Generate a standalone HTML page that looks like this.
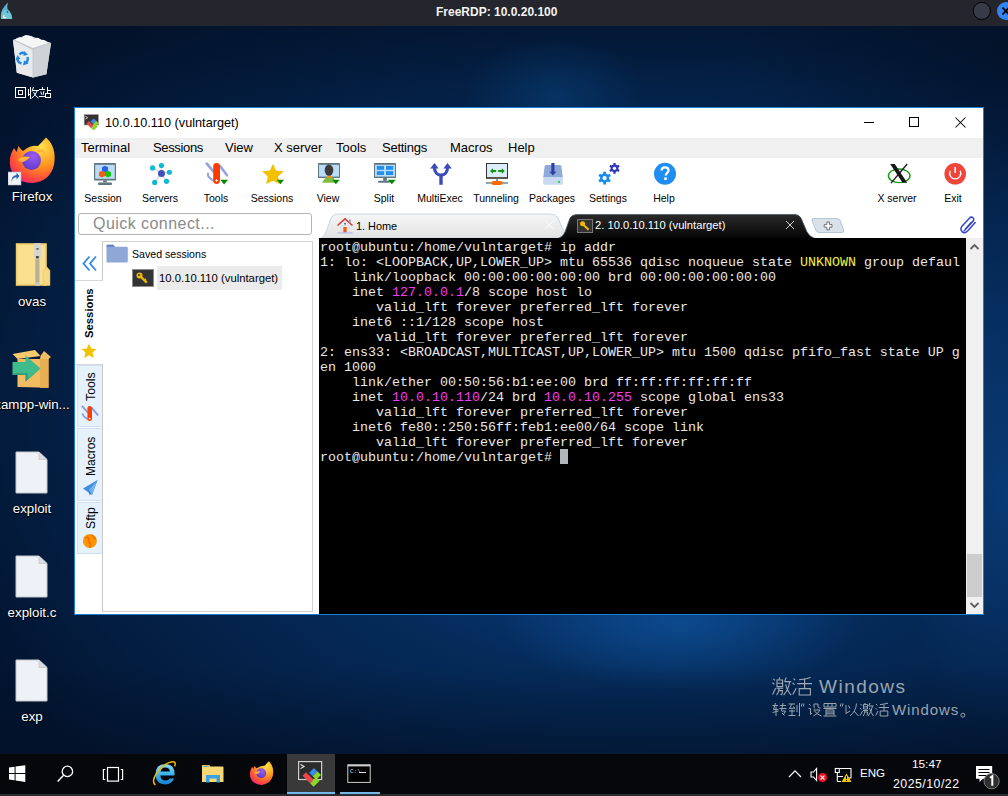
<!DOCTYPE html>
<html><head><meta charset="utf-8">
<style>
*{box-sizing:border-box;margin:0;padding:0}
html,body{width:1008px;height:796px;overflow:hidden}
body{position:relative;font-family:"Liberation Sans",sans-serif;background:#021226}
.a{position:absolute}
#topbar{left:0;top:0;width:1008px;height:26px;background:#24252d}
#desk{left:0;top:26px;width:1008px;height:728px;overflow:hidden;
 background:
 radial-gradient(ellipse 260px 150px at 1008px 26px, rgba(2,16,36,.55), rgba(2,16,36,0) 100%),
 radial-gradient(ellipse 90px 60px at 555px 70px, rgba(10,70,130,.45), rgba(10,70,130,0) 100%),
 linear-gradient(180deg, rgba(2,16,36,.55) 0px, rgba(2,16,36,.25) 60px, rgba(2,16,36,0) 200px),
 linear-gradient(180deg, rgba(2,16,36,0) 88%, rgba(2,16,36,.55) 100%),
 radial-gradient(ellipse 180px 70px at 680px 596px, rgba(16,90,165,.6), rgba(16,90,165,0) 100%),
 radial-gradient(ellipse 110px 260px at 1008px 470px, rgba(12,72,140,.55), rgba(12,72,140,0) 100%),
 radial-gradient(ellipse 720px 540px at 630px 380px, #0b4a8c 0%, #08397a 30%, #052b5a 50%, #04224a 70%, #031a3a 90%, #021430 100%)}
#taskbar{left:0;top:754px;width:1008px;height:40px;background:#05070b}
#bstrip{left:0;top:794px;width:1008px;height:2px;background:#2b2c31}
.dlabel{color:#fff;font-size:13.3px;text-align:center;width:80px;white-space:nowrap;text-shadow:0 0 2px #000,0 1px 1px #000}
.dfile{width:34px;height:44px}
#win{left:74px;top:107px;width:910px;height:508px;border:1px solid #1a7fd4;background:#fff}
.menu span{position:absolute;top:0;font-size:13px;color:#000;white-space:nowrap}
.tbl{top:192px;width:80px;margin-left:-40px;text-align:center;font-size:10.5px;color:#000;white-space:nowrap}
#term{left:319px;top:238px;width:647px;height:376px;background:#000;overflow:hidden}
#term pre{font-family:"Liberation Mono",monospace;font-size:13.33px;line-height:15px;color:#e8e8e8;position:absolute;left:1px;top:2px}
.vt{transform-origin:0 0;transform:rotate(-90deg);color:#000;white-space:nowrap;line-height:1}
.stab{left:77px;width:25px;background:#e5f1fb;border:1px solid #cfe0f0;border-right:none}
.mg{color:#f43cf4}.yl{color:#f0f040}
</style></head><body>
<div id="topbar" class="a"></div>
<div id="desk" class="a"></div>
<div id="taskbar" class="a"></div>
<div id="bstrip" class="a"></div>
<div class="a" style="left:436px;top:5px;font-size:12px;font-weight:bold;color:#f2f2f2">FreeRDP: 10.0.20.100</div>

<!-- top bar extras -->
<svg class="a" style="left:0;top:2px" width="14" height="18" viewBox="0 0 14 18"><path d="M1 17 Q0 10 4 5 Q6 2 8 0.5 Q6.8 4 7.5 7 Q12 11 12.3 17Z" fill="#5cb4cc"/><path d="M1.5 17 Q1 12 3 9 L8 8 Q11.5 11 12 17Z" fill="#72c4d8"/><circle cx="4.6" cy="14.8" r="1.8" fill="#fff"/><circle cx="5.2" cy="14.3" r="1" fill="#5cb4cc"/><circle cx="7.5" cy="9.8" r="0.9" fill="#1a5d78"/></svg>
<svg class="a" style="left:970px;top:0" width="38" height="24" viewBox="0 0 38 24"><circle cx="11.8" cy="10.9" r="8.6" fill="#373a47" stroke="#000" stroke-width="1"/><circle cx="36" cy="11" r="9" fill="#3584f0"/><path d="M32.5 7.5 L39 14.5 M39 7.5 L32.5 14.5" stroke="#000" stroke-width="1.8"/></svg>
<!-- desktop icons -->
<svg class="a" style="left:10px;top:33px" width="46" height="48" viewBox="10 33 46 48">
 <path d="M13 40 L27 35 L51 43 L46.4 74.3 L33 77.5 L16.8 72.8Z" fill="#dcdee2"/>
 <path d="M13 40 L33 50 L33 77.5 L16.8 72.8Z" fill="#e9eaec"/>
 <path d="M33 50 L51 43 L46.4 74.3 L33 77.5Z" fill="#cfd2d7"/>
 <path d="M13 40 L27 35 L51 43 L33 50Z" fill="#c4c7cc"/>
 <path d="M15 40 Q18 36 22 38 Q24 34 28 36 Q32 35 34 39 Q38 36 41 40 Q45 39 48 43 L33 48Z" fill="#f6f6f7"/>
 <path d="M33 50 V77.5" stroke="#b8bcc2" stroke-width="0.6"/>
 <g stroke="#1e88e5" stroke-width="2.4" fill="none"><path d="M19.5 54.5 Q22 51.5 25 53.5"/><path d="M27.5 57 Q28.5 61 25.5 63"/><path d="M21.5 63.5 Q17.5 62.5 17.5 58.5"/></g>
 <g fill="#1e88e5"><path d="M24 51 L28 54.5 L23.5 56Z"/><path d="M28.5 63.5 L23 65.5 L24 60.5Z"/><path d="M15.5 60 L17.5 55 L20.5 59Z"/></g>
</svg>
<svg class="a" style="left:12px;top:84px" width="42" height="16" viewBox="12 84 42 16"><g stroke="#fff" stroke-width="1" fill="none" shape-rendering="crispEdges">
 <path d="M15.5 87.5 H25.5 V97.5 H15.5Z M18.5 90.5 H22.5 V94.5 H18.5Z"/>
 <path d="M28.5 89 V95 L30 94.2 M30.5 87 V98.5"/>
 <path d="M32.5 90.5 H38.5"/>
 <path d="M42 87 V89 M39 89.5 H45 M39 96.5 H45 M47.5 87 V93 M47.5 90.5 H51 M45.5 93.5 H50.5 V97.5 H45.5Z"/>
 </g><g stroke="#fff" stroke-width="1" fill="none">
 <path d="M33.5 87 L32 91.5 M37 91 Q35.5 95.5 31.5 98.4 M33.5 92 Q35 96 38.5 98.2"/>
 <path d="M40.8 91.5 L41.6 94.5 M44 91 L43 95"/>
 </g></svg>
<svg class="a" style="left:8px;top:135px" width="50" height="52" viewBox="0 0 50 52">
 <defs><radialGradient id="ffo" cx="0.7" cy="0.2" r="0.9"><stop offset="0" stop-color="#ffe24a"/><stop offset="0.45" stop-color="#ff9a1f"/><stop offset="0.8" stop-color="#ff4a3a"/><stop offset="1" stop-color="#e8247a"/></radialGradient>
 <radialGradient id="ffp" cx="0.6" cy="0.3" r="0.8"><stop offset="0" stop-color="#9b5cf0"/><stop offset="1" stop-color="#5a35c8"/></radialGradient></defs>
 <path d="M38 2.5 Q49 12 46 30 Q42 46 25 48 Q8 48.5 2.5 33 Q0 22 6 13 L8.5 17 L10.5 11 Q13 15 15 16 Q22 10 30 11 Q35 6 38 2.5Z" fill="url(#ffo)"/>
 <circle cx="23.5" cy="25.5" r="9.5" fill="url(#ffp)"/>
 <path d="M10 25 Q14 20 22 22 Q19 26 15 27 Q12 27 10 25Z" fill="#ffb43a"/>
 <path d="M30 14 Q36 13 38 20 Q34 16 30 17Z" fill="#ffb43a"/>
 <rect x="0" y="37" width="13" height="13" fill="#f0f4f8" stroke="#a8b4c0" stroke-width="0.6"/>
 <path d="M3.5 47 Q3.5 42 8.5 41 L8.5 43.5 L11.5 40 L8.5 36.8 L8.5 39 Q3 39.5 3.5 47Z" fill="#2a62b0" transform="translate(0 1)"/>
</svg>
<svg class="a" style="left:14px;top:241px" width="38" height="47" viewBox="14 241 38 47">
 <rect x="15.8" y="243.2" width="31" height="42.6" fill="#f3cf6a"/>
 <rect x="17.6" y="245" width="27.4" height="39" fill="#f9df8e"/>
 <path d="M42.8 285.8 V270.4 L46.8 266.6 L50.2 270.6 V285.8Z" fill="#f1cb62"/>
 <path d="M43.6 285 V271 L46.8 268 L49.4 271 V285Z" fill="#f7d983"/>
 <rect x="35.6" y="256" width="3.6" height="27.5" fill="#8c8460"/>
 <path d="M35.8 258 h3.2 M35.8 260 h3.2 M35.8 262 h3.2 M35.8 264 h3.2 M35.8 266 h3.2 M35.8 268 h3.2 M35.8 270 h3.2 M35.8 272 h3.2 M35.8 274 h3.2 M35.8 276 h3.2 M35.8 278 h3.2 M35.8 280 h3.2" stroke="#e6e6e6" stroke-width="0.9"/>
 <rect x="35.2" y="281.5" width="4.4" height="4.3" fill="#c8c8c8"/>
 <path d="M34.2 243.2 H40.8 V256 Q40.8 259.6 37.5 259.6 Q34.2 259.6 34.2 256Z" fill="#d4d4d4"/>
 <rect x="36.4" y="248" width="2.2" height="1.8" fill="#666"/>
 <rect x="36" y="256" width="2.8" height="2.4" fill="#444"/>
</svg>
<svg class="a" style="left:11px;top:348px" width="44" height="42" viewBox="0 0 44 42">
 <path d="M6.5 11 H37.5 V39.8 L6.5 39Z" fill="#f2bd62"/>
 <path d="M29 11 H37.5 V39.8 H29Z" fill="#e8ae52"/>
 <path d="M1.5 6 L24 2 L29.5 8 L6.5 11Z" fill="#f7c96c"/>
 <path d="M29.5 8 L33 3 L40 9 L37.5 11 H29Z" fill="#f2bd62"/>
 <path d="M1.5 14 H14.5 V7.5 L29.5 20.5 L14.5 33.5 V27 H1.5Z" fill="#3fbb8c"/>
 <path d="M1.5 27 H14.5 V33.5 L29.5 20.5 L17 30.5 V25 H3Z" fill="#33a07a"/>
</svg>
<svg class="a dfile" style="left:15px;top:451px"><path d="M1 1 H24 L32 8.5 V42 H1Z" fill="#eef1f6" stroke="#c4c7cc" stroke-width="1"/><path d="M24 1 V8.5 H32Z" fill="#d9dde3" stroke="#c4c7cc" stroke-width="0.8"/></svg>
<svg class="a dfile" style="left:15px;top:555px"><path d="M1 1 H24 L32 8.5 V42 H1Z" fill="#eef1f6" stroke="#c4c7cc" stroke-width="1"/><path d="M24 1 V8.5 H32Z" fill="#d9dde3" stroke="#c4c7cc" stroke-width="0.8"/></svg>
<svg class="a dfile" style="left:15px;top:659px"><path d="M1 1 H24 L32 8.5 V42 H1Z" fill="#eef1f6" stroke="#c4c7cc" stroke-width="1"/><path d="M24 1 V8.5 H32Z" fill="#d9dde3" stroke="#c4c7cc" stroke-width="0.8"/></svg>
<div class="a dlabel" style="left:-8px;top:189px">Firefox</div>
<div class="a dlabel" style="left:-8px;top:294px">ovas</div>
<div class="a dlabel" style="left:-8px;top:397px">xampp-win...</div>
<div class="a dlabel" style="left:-8px;top:501px">exploit</div>
<div class="a dlabel" style="left:-8px;top:605px">exploit.c</div>
<div class="a dlabel" style="left:-8px;top:709px">exp</div>
<!-- activation watermark -->
<svg class="a" style="left:770px;top:675px" width="44" height="22" viewBox="770 675 44 22"><g stroke="#a3abb4" stroke-width="1.1" fill="none">
 <path d="M773.2 678.8 L775 680.4 M772.4 682.8 L774.4 684.4 M772.6 694.6 L775.6 688.2"/>
 <path d="M779.6 677.4 L779 679.6 M777 680 H782.6 V686.6 H777Z M777 683.3 H782.6"/>
 <path d="M776.4 688.2 H783.2 M779 688.4 Q779 692.5 776.6 695 M779.2 690.6 H782.4 Q782.6 693.5 781.6 694.6 L780.4 694.2"/>
 <path d="M786.2 677.4 L784.6 681.6 M784.6 681.6 H791.2 M789.6 681.8 Q788.5 690 783.6 695 M785.6 684.4 Q787.5 691.5 791.2 695"/>
 <path d="M793.6 678.6 L795.2 680.2 M792.6 683 L794.6 684.6 M792.8 694.6 L796.2 688.2"/>
 <path d="M810.6 677.4 Q805 679.2 799 679.8 M797.2 683.6 H812 M804.6 679 V688.2 M799.2 688.6 H810.4 V695 H799.2Z"/>
 </g></svg>
<div class="a" style="left:819px;top:676px;font-size:19px;color:#9ba4ae;white-space:nowrap;letter-spacing:1.5px">Windows</div>
<svg class="a" style="left:770px;top:701px" width="122" height="17" viewBox="770 701 122 17"><g stroke="#9ba4ae" stroke-width="1" fill="none">
 <path d="M772.5 705.5 H778 M775.5 703 L773.5 709.5 H778.5 M776 706.5 V716 M772.5 712.5 L778.5 711"/>
 <path d="M780 705.5 H786 M779.5 708.5 H786.5 M783 703 L781.5 711 H785.5 L783.5 714.5 M782 713 L784.5 715.5"/>
 <path d="M788.5 704 H795 M792 704 L789.5 708.5 L794.5 708 M793.5 706.5 L795 709 M789 711 H795 M792 709.5 V715 M788.5 715.5 H795.5"/>
 <path d="M797 705 V712 M799.5 703 V716 L798.5 715.5"/>
 <path d="M802 703.5 L801.3 706.5 M804 703.5 L803.3 706.5"/>
 <path d="M809 704 L810.5 705.5 M808.5 708.5 H810.5 V714.5 L812 713"/>
 <path d="M814 704 V707 Q814 708 815 708 M814 704 H818 V707 Q818 708 820.5 708 M813.5 710 H820 Q818.5 713.5 813.5 716 M814.5 711 Q817 714.5 821.5 716"/>
 <path d="M824 703.5 H836 V707 H824Z M828 703.5 V707 M832 703.5 V707"/>
 <path d="M823.5 708.5 H836.5 M830 707.5 V709.5 M826 709.5 V716 M826 710 H834 V715.5 M826 712 H834 M826 713.8 H834 M823.5 716 H836.5"/>
 <path d="M841 703.5 L840.3 706.5 M843 703.5 L842.3 706.5"/>
 <path d="M846 705 V713.5 L850 711 M848.5 705.5 L850 708.5 M856.5 703.5 Q856 711 850 716 M854 711 L858.5 716"/>
 <path d="M860.5 704 L862 705.5 M860 708 L861.5 709.5 M860.2 715.5 L862.5 711"/>
 <path d="M865 703 L864.6 704.5 M863.5 704.5 H867.5 V709 H863.5Z M863.5 706.8 H867.5 M863 710.5 H868 M865 710.5 Q865 713.5 863.2 716 M865.2 712 H867.6 Q867.7 714.5 866.8 715.5"/>
 <path d="M870 703 L868.8 706 H873.5 M872.5 706 Q871.5 712 868.2 716 M869.5 708 Q871 713 873.5 716"/>
 <path d="M876 704 L877.5 705.5 M875.5 708 L877 709.5 M875.7 715.5 L878 711"/>
 <path d="M888 703.2 Q884 704.2 880 704.6 M878.8 707.5 H889 M884 704.5 V711 M880.2 711 H887.8 V716 H880.2Z"/>
 </g></svg>
<div class="a" style="left:892px;top:701px;font-size:15px;color:#9ba4ae;white-space:nowrap;letter-spacing:0.9px">Windows</div>
<svg class="a" style="left:958px;top:711px" width="10" height="8" viewBox="958 711 10 8"><circle cx="962.9" cy="715.2" r="2" stroke="#9aa3ad" stroke-width="1" fill="none"/></svg>
<!-- taskbar icons -->
<svg class="a" style="left:8px;top:765px" width="19" height="18" viewBox="0 0 19 18"><g fill="#fff"><path d="M1 2.5 L6.6 1.7 V7.9 H1Z"/><path d="M7.6 1.55 L17.3 0.2 V7.9 H7.6Z"/><path d="M1 9 H6.6 V15.3 L1 14.5Z"/><path d="M7.6 9 H17.3 V16.9 L7.6 15.5Z"/></g></svg>
<svg class="a" style="left:55px;top:763px" width="20" height="21" viewBox="0 0 20 21"><circle cx="12.4" cy="8.4" r="5.2" stroke="#fff" stroke-width="1.3" fill="none"/><path d="M8.6 12.2 L2.6 18.4" stroke="#fff" stroke-width="1.5"/></svg>
<svg class="a" style="left:101px;top:765px" width="24" height="18" viewBox="0 0 24 18"><g stroke="#fff" stroke-width="1.2" fill="none"><rect x="6.5" y="2.5" width="11" height="13.6"/><path d="M4.3 4.5 H2.4 V14.5 H4.3 M19.7 4.5 H21.6 V14.5 H19.7"/></g></svg>
<svg class="a" style="left:151px;top:760px" width="26" height="27" viewBox="151 760 26 27">
 <defs><linearGradient id="ieg" x1="0" y1="0" x2="0" y2="1"><stop offset="0" stop-color="#8adcfa"/><stop offset="0.5" stop-color="#3ab4ee"/><stop offset="1" stop-color="#1a7fd0"/></linearGradient></defs>
 <path d="M174.4 775.6 H160.4 Q160.8 780.6 165.6 780.6 Q168.6 780.6 170 778.6 H174 Q172 784.4 165.4 784.4 Q155.6 784.4 155.6 774.2 Q155.6 764 165.4 764 Q174.6 764 174.6 774.2Z M160.6 771.6 H170 Q169.4 767.6 165.4 767.6 Q161.4 767.6 160.6 771.6Z" fill="url(#ieg)" fill-rule="evenodd"/>
 <path d="M155.4 785 Q150.8 781.5 157.5 772 Q165 762.5 172.5 761.8 Q176.5 761.6 174.6 766.4" stroke="#f2b600" stroke-width="1.5" fill="none"/>
</svg>
<svg class="a" style="left:201px;top:764px" width="24" height="20" viewBox="0 0 24 20"><path d="M1 2 Q1 1 2 1 H8 L9.5 2.5 H21.5 Q22.5 2.5 22.5 3.5 V18 H1Z" fill="#f8d775"/><path d="M1 1 H8 L9.5 2.5 H1Z" fill="#e6b74a"/><rect x="2.5" y="2" width="5" height="1" fill="#5ab4e8"/><path d="M5 11 H19 V18.5 H15.5 V14.5 H8.5 V18.5 H5Z" fill="#3aa2e2"/></svg>
<svg class="a" style="left:249px;top:760px" width="26" height="27" viewBox="0 0 50 52">
 <path d="M38 2.5 Q49 12 46 30 Q42 46 25 48 Q8 48.5 2.5 33 Q0 22 6 13 L8.5 17 L10.5 11 Q13 15 15 16 Q22 10 30 11 Q35 6 38 2.5Z" fill="url(#ffo)"/>
 <circle cx="23.5" cy="25.5" r="9.5" fill="url(#ffp)"/>
 <path d="M10 25 Q14 20 22 22 Q19 26 15 27 Q12 27 10 25Z" fill="#ffb43a"/>
</svg>
<div class="a" style="left:287px;top:754px;width:48px;height:40px;background:#393939"></div>
<div class="a" style="left:287px;top:792px;width:48px;height:2px;background:#76b9ed"></div>
<div class="a" style="left:340px;top:792px;width:40px;height:2px;background:#76b9ed"></div>
<svg class="a" style="left:297px;top:760px" width="28" height="27" viewBox="83.4 113.6 17.5 16.9">
 <rect x="84.4" y="114.6" width="14.4" height="11.2" fill="#2b2b2b" stroke="#cfcfcf" stroke-width="0.75"/>
 <path d="M85.6 116.4 L87.8 117.7 L85.6 119" stroke="#e8e8e8" stroke-width="0.7" fill="none"/>
 <path d="M86.8 123.4 L89 121.2 L93.8 126 L91.6 128.2Z" fill="#e8474a"/>
 <path d="M91 121.6 L94 118.6 L96.2 120.8 L93.2 123.8Z" fill="#3d88ec"/>
 <path d="M91.6 128.2 L93.8 126 L95.4 124.4 L97.6 126.6 L96 128.2 L93.8 130.4Z" fill="#8cd82a"/>
 <path d="M93.2 123.8 L96.2 120.8 L98.4 123 L95.4 126Z" fill="#8cd82a"/>
</svg>
<svg class="a" style="left:347px;top:764px" width="24" height="20" viewBox="0 0 24 20"><rect x="0.8" y="0.8" width="22.4" height="17.6" fill="#000" stroke="#cfcfcf" stroke-width="1"/><rect x="0.8" y="0.8" width="22.4" height="1.6" fill="#cfcfcf"/><text x="3" y="9" font-family="Liberation Mono" font-size="6" fill="#ddd">C:\</text><rect x="12" y="8" width="7" height="1" fill="#ddd"/></svg>
<!-- tray -->
<svg class="a" style="left:788px;top:769px" width="14" height="9" viewBox="0 0 14 9"><path d="M1 8 L7 1.8 L13 8" stroke="#fff" stroke-width="1.2" fill="none"/></svg>
<svg class="a" style="left:810px;top:767px" width="18" height="16" viewBox="0 0 18 16"><path d="M1 5 H3.5 L6.6 1.5 V13.5 L3.5 10 H1Z" stroke="#fff" stroke-width="1.1" fill="none"/><circle cx="12.5" cy="10.6" r="4.6" fill="#e81123"/><path d="M10.6 8.7 L14.4 12.5 M14.4 8.7 L10.6 12.5" stroke="#fff" stroke-width="1.1"/></svg>
<svg class="a" style="left:834px;top:767px" width="19" height="16" viewBox="0 0 19 16"><g stroke="#fff" stroke-width="1.1" fill="none"><path d="M6 1.5 H17 V11 H11"/><rect x="1.3" y="1.5" width="4" height="4"/><path d="M3.3 5.5 V14.5 M3.3 9.5 H9 M3.3 14.5 H7"/></g><path d="M12.5 6.5 L17.5 15 H7.5Z" fill="#f4c400"/><path d="M12.5 9 V12 M12.5 13 V14" stroke="#000" stroke-width="1"/></svg>
<div class="a" style="left:860px;top:766px;font-size:11.6px;color:#fff;white-space:nowrap">ENG</div>
<div class="a" style="left:912px;top:757px;font-size:11.8px;color:#fff;white-space:nowrap">15:47</div>
<div class="a" style="left:893px;top:777px;font-size:12.3px;color:#fff;white-space:nowrap;letter-spacing:0.5px">2025/10/22</div>
<svg class="a" style="left:974px;top:764px" width="30" height="30" viewBox="0 0 30 30"><path d="M2 2 H18.2 V14.8 H9 L5.5 18 V14.8 H2Z" fill="#fff"/><path d="M4.5 5.5 H15.5 M4.5 8.5 H15.5 M4.5 11.5 H12" stroke="#000" stroke-width="1.1"/><circle cx="17.6" cy="17.2" r="7.6" fill="#2f2f2f" stroke="#7a7a7a" stroke-width="1"/><path d="M16 13.8 L18.3 12.2 V21.8" stroke="#fff" stroke-width="2" fill="none"/></svg>
<div id="win" class="a"></div>
<!-- title bar -->
<svg class="a" style="left:83px;top:113px" width="17" height="17" viewBox="83 113 17 17">
 <rect x="84.2" y="114.6" width="14.2" height="10.4" fill="#333" stroke="#9a9a9a" stroke-width="0.7"/>
 <path d="M85.3 116.3 L87.8 117.7 L85.3 119.1" stroke="#e0e0e0" stroke-width="0.8" fill="none"/>
 <path d="M86.4 123.4 L88.8 121 L93.6 125.8 L91.2 128.2Z" fill="#e8474a"/>
 <path d="M90.6 121.6 L93.8 118.4 L96.2 120.8 L93 124Z" fill="#3d88ec"/>
 <path d="M91.2 128.2 L93.6 125.8 L95.2 124.2 L97.6 126.6 L96 128.2 L93.6 130.6Z" fill="#8cd82a"/>
 <path d="M93 124 L96.2 120.8 L98.6 123.2 L95.4 126.4Z" fill="#8cd82a"/>
</svg>
<div class="a" style="left:105px;top:116px;font-size:12.7px;color:#000;white-space:nowrap">10.0.10.110 (vulntarget)</div>
<div class="a" style="left:864px;top:122px;width:10px;height:1px;background:#000"></div>
<div class="a" style="left:909px;top:117px;width:10px;height:10px;border:1px solid #000"></div>
<svg class="a" style="left:955px;top:117px" width="11" height="11" viewBox="0 0 11 11"><path d="M0.5 0.5 L10.5 10.5 M10.5 0.5 L0.5 10.5" stroke="#000" stroke-width="1.05"/></svg>
<!-- menu -->
<div class="a" style="left:75px;top:138px;width:908px;height:20px;background:#f0f0f0"></div>
<div class="a menu" style="left:0;top:140px;width:1008px;height:16px">
 <span style="left:81px">Terminal</span><span style="left:153px;letter-spacing:-0.35px">Sessions</span><span style="left:225px">View</span><span style="left:274px">X server</span><span style="left:336px">Tools</span><span style="left:382px;letter-spacing:-0.25px">Settings</span><span style="left:450px">Macros</span><span style="left:508px">Help</span>
</div>

<!-- toolbar icons -->
<svg class="a" style="left:90px;top:160px" width="30" height="30" viewBox="0 0 30 30">
 <rect x="4" y="3" width="22" height="17.5" rx="0.8" fill="#5e7682"/>
 <rect x="5.2" y="4.8" width="19.6" height="14" fill="#bcdcf6"/>
 <rect x="13.2" y="20.3" width="3.6" height="2.2" fill="#5e7682"/>
 <rect x="8" y="22.6" width="14" height="2.3" rx="1" fill="#5e7682"/>
 <path d="M15 5.8 L18 7.2 L18 11 L15 12.4 L12 11 L12 7.2Z" fill="#2a62f2"/>
 <path d="M12 10.8 L15 12.2 L15 16 L12 17.4 L9 16 L9 12.2Z" fill="#f2600e"/>
 <path d="M18 10.8 L21 12.2 L21 16 L18 17.4 L15 16 L15 12.2Z" fill="#16c416"/>
</svg>
<svg class="a" style="left:146px;top:160px" width="30" height="30" viewBox="0 0 30 30">
 <g stroke="#d4d8e0" stroke-width="1.4"><path d="M15.45 13.4 L15.45 5.5 M15.45 13.4 L6.6 7.9 M15.45 13.4 L23.4 12.25 M15.45 13.4 L20.5 21.3 M15.45 13.4 L8.7 22.4"/></g>
 <circle cx="15.45" cy="13.4" r="3.5" fill="#4250b8"/>
 <g fill="#10b8d6"><circle cx="15.45" cy="5.5" r="2.6"/><circle cx="6.6" cy="7.9" r="2.6"/><circle cx="23.4" cy="12.25" r="2.6"/><circle cx="20.5" cy="21.3" r="2.6"/><circle cx="8.7" cy="22.4" r="2.6"/></g>
</svg>
<svg class="a" style="left:202px;top:160px" width="30" height="30" viewBox="0 0 30 30">
 <g stroke="#8a98dc" stroke-linecap="round" fill="none" opacity="0.9"><path d="M4.8 3.6 L11 11" stroke-width="2.6"/><path d="M18 6 L25 15.2" stroke-width="2.6"/><path d="M6 13.5 C5 16 8 18.5 11 20.5" stroke-width="2"/></g>
 <rect x="11.2" y="3" width="6.8" height="21" rx="3.4" fill="#ff3c00"/>
 <path d="M14.6 18.8 L15.2 20 L16.4 20.5 L15.2 21 L14.6 22.2 L14 21 L12.8 20.5 L14 20Z" fill="#fff"/>
 <path d="M18.3 19.8 L26 19.8 L22.1 24.6Z" fill="#008a00"/>
</svg>
<svg class="a" style="left:258px;top:160px" width="30" height="30" viewBox="0 0 30 30">
 <path d="M15 3.8 L18 10.6 L25.8 11.3 L20 16.4 L21.6 24 L15 20.8 L8.2 24 L9.8 16.4 L4.1 11.3 L11.9 10.6Z" fill="#f2c100"/>
 <path d="M18.8 19.8 L26 19.8 L22.4 24.2Z" fill="#008a00"/>
</svg>
<svg class="a" style="left:314px;top:160px" width="30" height="30" viewBox="0 0 30 30">
 <rect x="4" y="3" width="22" height="15" rx="0.8" fill="#5e7682"/>
 <rect x="5" y="4.8" width="20" height="11.8" fill="#bcdcf6"/>
 <path d="M8 22.8 L11.5 17.6 L19.5 17.6 L22 22.8Z" fill="#7cc043"/>
 <rect x="12.8" y="15.6" width="4.8" height="2.2" fill="#ff9500"/>
 <ellipse cx="15" cy="10.2" rx="4.3" ry="5.6" fill="#3b3b3b"/>
 <path d="M18.3 19.8 L25.8 19.8 L21.8 24.2Z" fill="#008a00"/>
</svg>
<svg class="a" style="left:370px;top:160px" width="30" height="30" viewBox="0 0 30 30">
 <rect x="4" y="3" width="22" height="15" rx="0.8" fill="#5e7682"/>
 <rect x="5" y="4.8" width="20" height="11.8" fill="#bcdcf6"/>
 <g fill="#2090f2"><rect x="6.8" y="6" width="7.2" height="3.8"/><rect x="16" y="6" width="7.2" height="3.8"/><rect x="6.8" y="11.2" width="7.2" height="3.8"/><rect x="16" y="11.2" width="7.2" height="3.8"/></g>
 <rect x="13.2" y="18" width="3.6" height="2.8" fill="#5e7682"/>
 <rect x="8" y="20.8" width="12" height="2" rx="0.8" fill="#5e7682"/>
 <path d="M18 19.8 L25.8 19.8 L21.8 24.2Z" fill="#008a00"/>
</svg>
<svg class="a" style="left:426px;top:160px" width="30" height="30" viewBox="0 0 30 30">
 <g fill="#3a4cb8"><path d="M4.2 8.6 L8.5 3 L12.6 8.6Z"/><path d="M17.4 8.6 L21.5 3 L25.8 8.6Z"/><rect x="13.3" y="15" width="3.4" height="9.8"/></g>
 <path d="M8.5 7.5 C8.5 12.5 11.5 15.2 15 15.2 C18.5 15.2 21.5 12.5 21.5 7.5" stroke="#3a4cb8" stroke-width="3.2" fill="none"/>
</svg>
<svg class="a" style="left:482px;top:160px" width="30" height="30" viewBox="0 0 30 30">
 <rect x="4" y="3" width="22" height="15.8" fill="#333"/>
 <rect x="5" y="4" width="20" height="13.2" fill="#dcecfa"/>
 <path d="M8 11 L11 8.2 L11 10 L14.2 10 L14.2 12 L11 12 L11 13.8Z" fill="#0e960e"/>
 <path d="M22.8 11 L19.8 8.2 L19.8 10 L16.2 10 L16.2 12 L19.8 12 L19.8 13.8Z" fill="#0e960e"/>
 <rect x="14" y="18.8" width="2" height="2.5" fill="#8a9aa5"/>
 <rect x="4" y="22.2" width="22" height="1.6" fill="#7d8f99"/>
 <rect x="9.6" y="21" width="10.8" height="4" rx="1.8" fill="#ff6a00"/>
</svg>
<svg class="a" style="left:538px;top:160px" width="30" height="30" viewBox="0 0 30 30">
 <path d="M8.2 5 L21.8 5 Q23 5 23.3 6.2 L24.8 17.6 L5.2 17.6 L6.7 6.2 Q7 5 8.2 5Z" fill="#8eaad8"/>
 <rect x="5.2" y="17.4" width="19.6" height="7.4" rx="1.4" fill="#c8daf2"/>
 <rect x="20.2" y="21" width="1.8" height="1.8" fill="#22cc22"/>
 <rect x="13.3" y="3" width="3.2" height="9" fill="#3440a8"/>
 <path d="M11.2 11.8 L18.5 11.8 L14.9 15.6Z" fill="#3440a8"/>
</svg>
<svg class="a" style="left:594px;top:156px" width="30" height="30" viewBox="0 0 30 30"><circle cx="10.6" cy="22.1" r="4.6" fill="#1a8cf2"/><rect x="9.20" y="15.70" width="2.8" height="2.80" fill="#1a8cf2" transform="rotate(0 10.6 22.1)"/><rect x="9.20" y="15.70" width="2.8" height="2.80" fill="#1a8cf2" transform="rotate(60 10.6 22.1)"/><rect x="9.20" y="15.70" width="2.8" height="2.80" fill="#1a8cf2" transform="rotate(120 10.6 22.1)"/><rect x="9.20" y="15.70" width="2.8" height="2.80" fill="#1a8cf2" transform="rotate(180 10.6 22.1)"/><rect x="9.20" y="15.70" width="2.8" height="2.80" fill="#1a8cf2" transform="rotate(240 10.6 22.1)"/><rect x="9.20" y="15.70" width="2.8" height="2.80" fill="#1a8cf2" transform="rotate(300 10.6 22.1)"/><circle cx="10.6" cy="22.1" r="2.1" fill="#fff"/><circle cx="20.5" cy="12.35" r="3.8" fill="#3238b8"/><rect x="19.35" y="6.95" width="2.3" height="2.60" fill="#3238b8" transform="rotate(0 20.5 12.35)"/><rect x="19.35" y="6.95" width="2.3" height="2.60" fill="#3238b8" transform="rotate(60 20.5 12.35)"/><rect x="19.35" y="6.95" width="2.3" height="2.60" fill="#3238b8" transform="rotate(120 20.5 12.35)"/><rect x="19.35" y="6.95" width="2.3" height="2.60" fill="#3238b8" transform="rotate(180 20.5 12.35)"/><rect x="19.35" y="6.95" width="2.3" height="2.60" fill="#3238b8" transform="rotate(240 20.5 12.35)"/><rect x="19.35" y="6.95" width="2.3" height="2.60" fill="#3238b8" transform="rotate(300 20.5 12.35)"/><circle cx="20.5" cy="12.35" r="1.6" fill="#fff"/></svg>
<svg class="a" style="left:650px;top:160px" width="30" height="30" viewBox="0 0 30 30">
 <circle cx="15" cy="13.8" r="11" fill="#1e8ef2"/>
 <path d="M11.6 10.6 C11.6 8.4 13.2 7.4 15 7.4 C17 7.4 18.5 8.6 18.5 10.4 C18.5 12.6 15.8 13 15.8 15.6" stroke="#fff" stroke-width="2.3" fill="none"/>
 <rect x="14.2" y="17.4" width="2.6" height="2.6" fill="#fff"/>
</svg>
<svg class="a" style="left:883px;top:160px" width="30" height="30" viewBox="0 0 30 30">
 <ellipse cx="16.2" cy="15.8" rx="10.8" ry="6.8" stroke="#129a12" stroke-width="1.4" fill="none"/>
 <path d="M7.2 4 L11.8 4 L24.2 22.8 L19.6 22.8Z" fill="#161616"/>
 <path d="M24.2 4 L8 23.2" stroke="#161616" stroke-width="1.3"/>
</svg>
<svg class="a" style="left:939px;top:160px" width="30" height="30" viewBox="0 0 30 30">
 <circle cx="16.2" cy="13.8" r="10.8" fill="#f0453a"/>
 <path d="M11.2 10.8 A5.6 5.6 0 1 0 21.2 10.8" stroke="#fff" stroke-width="1.3" fill="none"/>
 <rect x="15.4" y="7" width="1.6" height="6" fill="#fff"/>
</svg>
<!-- toolbar labels -->
<div class="a tbl" style="left:103px">Session</div>
<div class="a tbl" style="left:160px">Servers</div>
<div class="a tbl" style="left:216px">Tools</div>
<div class="a tbl" style="left:272px">Sessions</div>
<div class="a tbl" style="left:328px">View</div>
<div class="a tbl" style="left:384px">Split</div>
<div class="a tbl" style="left:440px">MultiExec</div>
<div class="a tbl" style="left:496px">Tunneling</div>
<div class="a tbl" style="left:552px">Packages</div>
<div class="a tbl" style="left:608px">Settings</div>
<div class="a tbl" style="left:664px">Help</div>
<div class="a tbl" style="left:897px">X server</div>
<div class="a tbl" style="left:953px">Exit</div>
<!-- quick connect -->
<div class="a" style="left:78px;top:213px;width:234px;height:22px;border:1px solid #b4b4b4;border-radius:3px;background:#fff"></div>
<div class="a" style="left:93px;top:215px;font-size:16px;letter-spacing:0.45px;color:#8a8a8a;white-space:nowrap">Quick connect...</div>
<!-- left side tabs -->
<div class="a" style="left:102px;top:241px;width:211px;height:371px;border:1px solid #d2d2d2;border-left-color:#c8c8c8"></div>
<div class="a" style="left:75px;top:280px;width:28px;height:1px;background:#d6d6d6"></div>
<div class="a" style="left:102px;top:281px;width:1px;height:83px;background:#fff"></div>
<svg class="a" style="left:82px;top:255px" width="16" height="18" viewBox="0 0 16 18"><path d="M7.5 1.5 L1.5 8.5 L7.5 15.5 M14 1.5 L8 8.5 L14 15.5" stroke="#2f8ae8" stroke-width="1.8" fill="none"/></svg>
<div class="a vt" style="left:84px;top:338px;font-weight:bold;font-size:11.3px">Sessions</div>
<svg class="a" style="left:80px;top:343px" width="18" height="17" viewBox="0 0 18 17"><path d="M9 0.6 L11.2 5.6 L16.6 6 L12.5 9.6 L13.8 15 L9 12.2 L4.2 15 L5.5 9.6 L1.4 6 L6.8 5.6Z" fill="#f2c100"/></svg>
<div class="a" style="left:75px;top:364px;width:28px;height:1px;background:#d6d6d6"></div>
<div class="a stab" style="top:365px;height:62px"></div>
<div class="a stab" style="top:428px;height:73px"></div>
<div class="a stab" style="top:502px;height:52px"></div>
<div class="a vt" style="left:85px;top:401px;font-size:12.3px">Tools</div>
<svg class="a" style="left:78px;top:400px" width="24" height="26" viewBox="78 400 24 26"><g stroke="#8a98dc" stroke-linecap="round" fill="none"><path d="M82.4 406.4 L87.2 412" stroke-width="1.9"/><path d="M92 408 L97.6 414.8" stroke-width="1.9"/><path d="M82.6 414 Q83.5 417 87.2 419" stroke-width="1.7"/></g><rect x="87.4" y="406" width="4.6" height="15" rx="2.3" fill="#ff3c00"/><circle cx="89.6" cy="418.6" r="0.9" fill="#fff"/></svg>
<div class="a vt" style="left:85px;top:476px;font-size:12px">Macros</div>
<svg class="a" style="left:82px;top:479px" width="17" height="18" viewBox="0 0 17 18"><path d="M1 9.5 L15.5 1 L10 16Z" fill="#3f8ee0"/><path d="M6.5 11 L15.5 1 L7.8 16.5Z" fill="#1d5fb8"/><path d="M6.5 11 L15.5 1 L10 16Z" fill="#6fb2f0"/></svg>
<div class="a vt" style="left:85px;top:529px;font-size:12.2px">Sftp</div>
<svg class="a" style="left:82px;top:533px" width="16" height="16" viewBox="0 0 16 16"><circle cx="7.9" cy="8" r="7" fill="#ff9500"/><path d="M3 5 Q6 3 7 6 Q5 9 8 10 Q10 13 7 14.5 M10 2 Q12 5 14 6" stroke="#f06a00" stroke-width="1.4" fill="none"/></svg>
<!-- session tree -->
<svg class="a" style="left:105px;top:244px" width="24" height="20" viewBox="0 0 24 20"><path d="M1.5 2 Q1.5 0.8 2.7 0.8 L8 0.8 L10 2.8 L21.5 2.8 Q22.8 2.8 22.8 4 L22.8 17.5 Q22.8 18.6 21.6 18.6 L2.7 18.6 Q1.5 18.6 1.5 17.4Z" fill="#8ea7d6"/><path d="M1.5 2 Q1.5 0.8 2.7 0.8 L8 0.8 L10 2.8 L1.5 2.8Z" fill="#5f80c4"/></svg>
<div class="a" style="left:132px;top:248px;font-size:10.6px;color:#000;white-space:nowrap">Saved sessions</div>
<div class="a" style="left:132px;top:269px;width:22px;height:18px;background:#333;border:1px solid #8c8c8c"></div>
<svg class="a" style="left:134px;top:271px" width="18" height="14" viewBox="0 0 18 14"><circle cx="5.5" cy="4.5" r="3" fill="#f2b800"/><path d="M7 6 L12.8 11.6" stroke="#f2b800" stroke-width="2.4"/><path d="M10.2 9.2 L11.8 7.8" stroke="#f2b800" stroke-width="1.5"/><circle cx="5" cy="4" r="1" fill="#333"/></svg>
<div class="a" style="left:157px;top:266px;width:125px;height:24px;background:#ebebeb"></div>
<div class="a" style="left:159px;top:272px;font-size:11.3px;color:#000;white-space:nowrap">10.0.10.110 (vulntarget)</div>
<!-- tabs -->
<svg class="a" style="left:318px;top:212px" width="650" height="27" viewBox="0 0 650 27">
 <defs><linearGradient id="tg1" x1="0" y1="0" x2="0" y2="1"><stop offset="0" stop-color="#f6f6f6"/><stop offset="1" stop-color="#e2e2e2"/></linearGradient>
 <linearGradient id="tg2" x1="0" y1="0" x2="0" y2="1"><stop offset="0" stop-color="#2a2a2a"/><stop offset="1" stop-color="#050505"/></linearGradient></defs>
 <path d="M3 26 Q6 25 8 20 L13 6 Q15 2 20 2 L232 2 Q237 2 240 6 L246 20 Q248 25 252 26Z" fill="url(#tg1)" stroke="#c8d6e2" stroke-width="1"/>
 <path d="M240 26.5 Q245 25 247 20 L252 6 Q254 2.5 259 2.5 L477 2.5 Q481 2.5 483 6 L489 20 Q492 25 497 26.5Z" fill="url(#tg2)" stroke="#4a5866" stroke-width="0.8"/>
 <path d="M495 6.5 L519 6.5 Q521.5 6.5 522.5 9 L525.6 18 Q526.4 20.5 524 20.5 L501 20.5 Q498.8 20.5 498 18.5 L494.2 9 Q493.4 6.5 495 6.5Z" fill="#d9e1ea" stroke="#a9bccd" stroke-width="0.8"/>
 <path d="M508.8 10 h2.6 v2.6 h2.6 v2.6 h-2.6 v2.6 h-2.6 v-2.6 h-2.6 v-2.6 h2.6Z" fill="#fff" stroke="#666" stroke-width="0.9"/>
</svg>
<svg class="a" style="left:336px;top:217px" width="18" height="18" viewBox="0 0 18 18"><path d="M1.5 8.5 L9 1.8 L16.5 8.5" stroke="#d0403a" stroke-width="1.6" fill="none"/><rect x="13" y="2.5" width="1.6" height="3.6" fill="#8a98dc"/><rect x="4.2" y="8" width="9.6" height="7" fill="#e4e4e4"/><rect x="7.4" y="10" width="3.2" height="6" fill="#f05a14"/><circle cx="9" cy="6.8" r="1" fill="#3a6ab8"/><rect x="1.5" y="15.2" width="15" height="1.4" fill="#b8c0f0"/></svg>
<div class="a" style="left:356px;top:220px;font-size:10.9px;color:#000;white-space:nowrap">1. Home</div>
<svg class="a" style="left:543px;top:219px" width="12" height="12" viewBox="0 0 12 12"><path d="M2 2 L10 10 M10 2 L2 10" stroke="#fff" stroke-width="0.9"/></svg>
<div class="a" style="left:577px;top:219px;width:16px;height:14px;background:#333;border:1px solid #777"></div>
<svg class="a" style="left:578px;top:220px" width="14" height="12" viewBox="0 0 14 12"><circle cx="4.6" cy="3.8" r="2.5" fill="#f2b800"/><path d="M5.6 5 L10.6 9.8" stroke="#f2b800" stroke-width="2"/></svg>
<div class="a" style="left:595px;top:219px;font-size:11.2px;color:#fff;white-space:nowrap">2. 10.0.10.110 (vulntarget)</div>
<svg class="a" style="left:784px;top:219px" width="12" height="12" viewBox="0 0 12 12"><path d="M2 2 L10 10 M10 2 L2 10" stroke="#cfcfcf" stroke-width="1"/></svg>
<svg class="a" style="left:959px;top:214px" width="20" height="22" viewBox="0 0 20 22"><path d="M5.2 16.8 L13.8 7.4 Q15.6 5.4 13.9 3.8 Q12.2 2.3 10.4 4.2 L3.4 11.8 Q0.6 15 3 17.6 Q5.6 20 8.6 17 L16.2 8.6" stroke="#3546c4" stroke-width="1.5" fill="none" stroke-linecap="round"/><path d="M6.6 14.6 L12.4 8.2" stroke="#3546c4" stroke-width="1.3" stroke-linecap="round"/></svg>
<!-- scrollbar -->
<div class="a" style="left:966px;top:238px;width:17px;height:376px;background:#f0f0f0"></div>
<div class="a" style="left:967px;top:554px;width:15px;height:43px;background:#cdcdcd"></div>
<svg class="a" style="left:968px;top:242px" width="13" height="10" viewBox="0 0 13 10"><path d="M2.5 7 L6.5 3 L10.5 7" stroke="#606060" stroke-width="1.8" fill="none"/></svg>
<svg class="a" style="left:968px;top:600px" width="13" height="10" viewBox="0 0 13 10"><path d="M2.5 3 L6.5 7 L10.5 3" stroke="#606060" stroke-width="1.8" fill="none"/></svg>
<div id="term" class="a"><pre>root@ubuntu:/home/vulntarget# ip addr
1: lo: &lt;LOOPBACK,UP,LOWER_UP&gt; mtu 65536 qdisc noqueue state <span class="yl">UNKNOWN</span> group defaul
    link/loopback 00:00:00:00:00:00 brd 00:00:00:00:00:00
    inet <span class="mg">127.0.0.1</span>/8 scope host lo
       valid_lft forever preferred_lft forever
    inet6 ::1/128 scope host
       valid_lft forever preferred_lft forever
2: ens33: &lt;BROADCAST,MULTICAST,UP,LOWER_UP&gt; mtu 1500 qdisc pfifo_fast state UP g
en 1000
    link/ether 00:50:56:b1:ee:00 brd ff:ff:ff:ff:ff:ff
    inet <span class="mg">10.0.10.110</span>/24 brd <span class="mg">10.0.10.255</span> scope global ens33
       valid_lft forever preferred_lft forever
    inet6 fe80::250:56ff:feb1:ee00/64 scope link
       valid_lft forever preferred_lft forever
root@ubuntu:/home/vulntarget# </pre></div>
<div class="a" style="left:560px;top:449px;width:8px;height:15px;background:#b4b4bc"></div>
</body></html>
